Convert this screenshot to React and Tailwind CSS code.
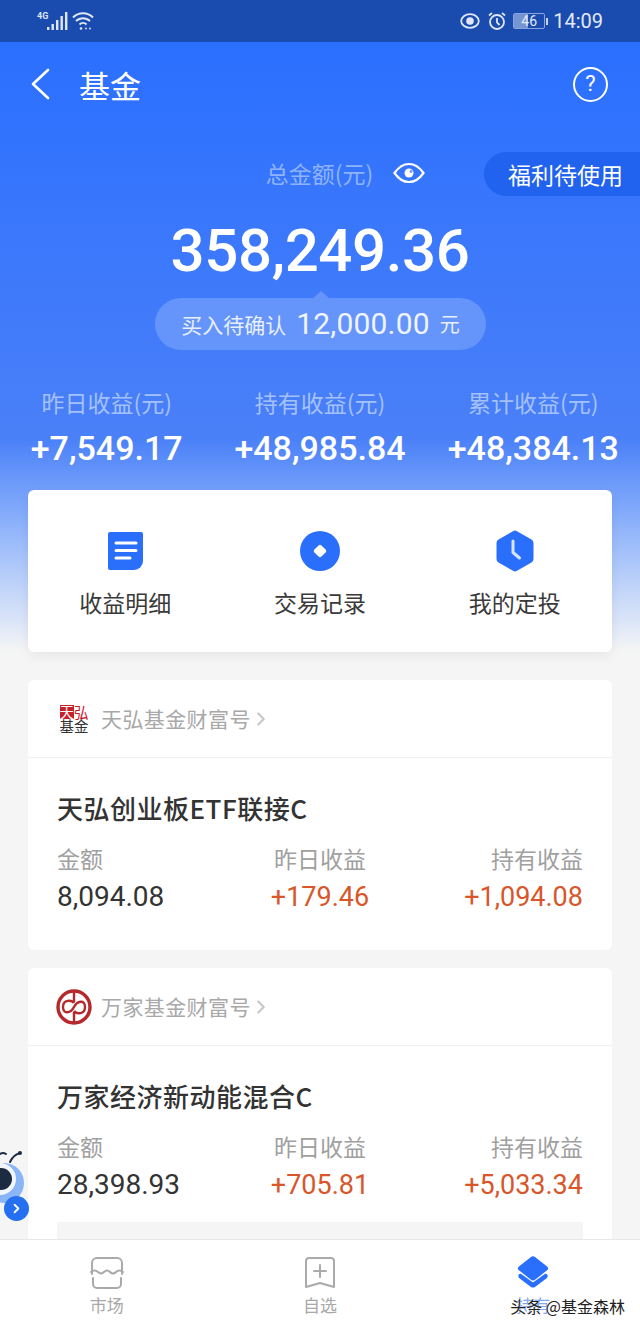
import React from "react";
import { ChevronRight } from "lucide-react";

const CJK = "font-['Noto_Sans_CJK_SC','Noto_Sans',sans-serif]";
const NUM = "font-['Roboto','Noto_Sans_CJK_SC',sans-serif]";

const StatusBar = () => (
  <div className="h-[42px] shrink-0 bg-[#1a4bae] flex items-center justify-between pl-[37px] pr-[37px] text-[#d5e0f5]">
    <div className="flex items-center gap-[1px]">
      <svg width="34" height="22" viewBox="0 0 34 22" fill="#dfe7f7">
        <text x="0" y="9" fontSize="9" fontFamily="Roboto" fontWeight="700">4G</text>
        <rect x="10" y="17" width="2.400" height="3" />
        <rect x="14.500" y="14" width="2.400" height="6" />
        <rect x="19" y="10" width="2.400" height="10" />
        <rect x="23.500" y="6" width="2.400" height="14" />
        <rect x="28" y="2" width="2.400" height="18" />
      </svg>
      <svg width="22" height="20" viewBox="0 0 22 20" fill="none" stroke="#dfe7f7" strokeWidth="2">
        <path d="M1 6.500a14 14 0 0 1 20 0" />
        <path d="M4 10a10 10 0 0 1 14 0" />
        <path d="M7.500 13.500a5 5 0 0 1 7 0" />
        <circle cx="9" cy="17.500" r="1.300" fill="#dfe7f7" stroke="none" />
        <circle cx="14" cy="17.500" r="0.900" fill="#dfe7f7" stroke="none" />
        <circle cx="18" cy="17.500" r="0.900" fill="#dfe7f7" stroke="none" />
      </svg>
    </div>
    <div className="flex items-center">
      <svg width="20" height="16" viewBox="0 0 20 16" fill="none" className="mr-[7px]">
        <ellipse cx="10" cy="8" rx="8.800" ry="6.800" stroke="#dfe7f7" strokeWidth="1.800" />
        <circle cx="10" cy="8" r="3.800" fill="#dfe7f7" />
      </svg>
      <svg width="20" height="20" viewBox="0 0 20 20" fill="none" stroke="#dfe7f7" strokeWidth="1.800" className="mr-[6px]">
        <circle cx="10" cy="11" r="7" />
        <path d="M10 7v4.500l2.500 2.500M2 4.500 5 2M18 4.500 15 2" />
      </svg>
      <div className="relative w-[32px] h-[16px] rounded-[2px] border border-[#8aa4db] overflow-hidden flex items-center justify-center text-[14px] leading-none text-[#e5ecf9] font-['Roboto',sans-serif]">
        <div className="absolute left-0 top-0 bottom-0 w-[46%] bg-[#7595d3]" />
        <span className="relative">46</span>
      </div>
      <div className="w-[2px] h-[7px] bg-[#c6d4ef] ml-[1px] mr-[5px]" />
      <span className="text-[20px] leading-none font-['Roboto',sans-serif] text-[#e3eaf8]">14:09</span>
    </div>
  </div>
);

const Stat = ({ label, value }) => (
  <div className="flex flex-col items-center">
    <div className={`${CJK} text-[23px] leading-[34px] text-[#a5c1fb] whitespace-nowrap`}>{label}</div>
    <div className={`${NUM} text-[34px] leading-[44px] font-medium text-white whitespace-nowrap mt-[7px]`}>{value}</div>
  </div>
);

const Action = ({ icon, label }) => (
  <div className="flex flex-col items-center w-[195px]">
    <div className="h-[44px] flex items-center justify-center">{icon}</div>
    <div className={`${CJK} text-[23px] leading-[32px] text-[#3a3a3a] mt-[13px]`}>{label}</div>
  </div>
);

const Cell = ({ label, value, align, red }) => (
  <div className={`flex flex-col ${align}`}>
    <div className={`${CJK} text-[23px] leading-[32px] text-[#a0a0a0]`}>{label}</div>
    <div className={`${NUM} leading-[36px] mt-[5px] ${red ? "text-[27px] text-[#d9562a]" : "text-[28px] text-[#333]"}`}>{value}</div>
  </div>
);

const FundCard = ({ logo, company, name, amount, yesterday, total, children, className }) => (
  <div className={`bg-white rounded-[6px] mx-[28px] shrink-0 ${className}`}>
    <div className="h-[78px] flex items-center pl-[28px] border-b border-[#f0f0f0]">
      <div className="w-[36px] flex justify-center">{logo}</div>
      <div className={`${CJK} text-[21px] leading-none text-[#a8a8a8] ml-[9px] tracking-[0.4px]`}>{company}</div>
      <ChevronRight size={22} strokeWidth={2.4} className="text-[#c8c8c8] -ml-[1px]" />
    </div>
    <div className="px-[29px] pt-[32px] pb-[35px]">
      <div className={`${CJK} text-[26px] leading-[36px] font-medium text-[#333] tracking-[0.5px]`}>{name}</div>
      <div className="grid grid-cols-3 mt-[16px]">
        <Cell label="金额" value={amount} align="items-start" />
        <Cell label="昨日收益" value={yesterday} align="items-center" red />
        <Cell label="持有收益" value={total} align="items-end" red />
      </div>
      {children}
    </div>
  </div>
);

const Mascot = () => (
  <div className="absolute left-0 top-[1146px] w-[30px] h-[76px]">
    <svg width="30" height="76" viewBox="0 0 30 76" fill="none">
      <path d="M10 16 Q13 9 20 7" stroke="#1f2a44" strokeWidth="2" strokeLinecap="round" />
      <circle cx="20" cy="7" r="2" fill="#1f2a44" />
      <path d="M0 8 Q3 6 6 8" stroke="#1f2a44" strokeWidth="2" strokeLinecap="round" />
      <circle cx="4" cy="37" r="20" fill="#8ab6f8" />
      <circle cx="0" cy="33" r="16" fill="#f2f6fd" />
      <circle cx="1" cy="33" r="11" fill="#1d2b40" />
    </svg>
    <div className="absolute left-[4px] top-[50px] w-[25px] h-[25px] rounded-full bg-[#2470f0] flex items-center justify-center">
      <ChevronRight size={15} strokeWidth={3} className="text-white" />
    </div>
  </div>
);

const TabBar = () => (
  <div className="h-[90px] shrink-0 bg-white border-t border-[#e8e8e8] grid grid-cols-3 relative">
    <div className="flex flex-col items-center pt-[16px]">
      <svg width="36" height="34" viewBox="0 0 36 34" fill="none" stroke="#aaa" strokeWidth="2" strokeLinecap="round" strokeLinejoin="round">
        <path d="M3 18V7a5 5 0 0 1 5-5h20a5 5 0 0 1 5 5v11" />
        <path d="M2 16q4-3 7 0t6 0 6 0 6 0 7 0" />
        <path d="M4 22v6a4 4 0 0 0 4 4h20a4 4 0 0 0 4-4v-6" />
      </svg>
      <div className={`${CJK} text-[17px] leading-[24px] text-[#a8a8a8] mt-[3px]`}>市场</div>
    </div>
    <div className="flex flex-col items-center pt-[16px]">
      <svg width="32" height="33" viewBox="0 0 32 33" fill="none" stroke="#aaa" strokeWidth="2" strokeLinejoin="round">
        <path d="M2 5a3 3 0 0 1 3-3h22a3 3 0 0 1 3 3v26l-14-4-14 4z" />
        <path d="M16 9v12M10 15h12" strokeLinecap="round" />
      </svg>
      <div className={`${CJK} text-[17px] leading-[24px] text-[#a8a8a8] mt-[4px]`}>自选</div>
    </div>
    <div className="flex flex-col items-center pt-[16px]">
      <svg width="32" height="34" viewBox="0 0 34 36" fill="#2a6ffb">
        <path d="M14.500 1.200a4 4 0 0 1 5 0l12.500 10a2.500 2.500 0 0 1 0 3.800l-12.500 10a4 4 0 0 1-5 0L2 15a2.500 2.500 0 0 1 0-3.800z" />
        <path d="M1.500 20.500a2 2 0 0 1 3-1.500l12.500 9 12.500-9a2 2 0 0 1 3 1.500v1.500a2 2 0 0 1-1 1.500l-12 9a4 4 0 0 1-5 0l-12-9a2 2 0 0 1-1-1.500z" />
      </svg>
      <div className={`${CJK} text-[17px] leading-[24px] text-[#7fa8f5] mt-[3px]`}>持有</div>
    </div>
    <div className={`${CJK} absolute right-[15px] top-[54px] text-[16px] leading-[24px] text-[#222] [text-shadow:0_0_1px_#fff] whitespace-nowrap`}>
      头条 @基金森林
    </div>
  </div>
);

export default function App() {
  return (
    <div className="relative w-[640px] h-[1329px] overflow-hidden flex flex-col bg-[#f5f5f5]">
      <StatusBar />
      <div className="flex-1 min-h-0 overflow-hidden bg-gradient-to-b from-[#2a6fff] via-[#4a80f8] via-[65%] to-[#f5f5f5] bg-[length:100%_610px] bg-no-repeat flex flex-col">
        {/* Nav */}
        <div className="h-[84px] shrink-0 flex items-center justify-between pl-[30px] pr-[32px]">
          <div className="flex items-center">
            <svg width="20" height="32" viewBox="0 0 20 32" fill="none" stroke="#fff" strokeWidth="2.600" strokeLinecap="round" strokeLinejoin="round">
              <path d="M18 2 3 16l15 14" />
            </svg>
            <span className={`${CJK} text-[31px] leading-none text-white ml-[29px] font-normal`}>基金</span>
          </div>
          <div className="w-[35px] h-[35px] rounded-full border-2 border-white flex items-center justify-center text-white text-[22px] leading-none font-['Roboto',sans-serif]">
            ?
          </div>
        </div>

        {/* Total */}
        <div className="relative h-[90px] shrink-0 flex items-center justify-center pl-[51px] pt-[4px]">
          <span className={`${CJK} text-[23px] leading-none text-[#8fb3fb]`}>总金额(元)</span>
          <svg width="32" height="22" viewBox="0 0 32 22" fill="none" className="ml-[20px]">
            <path d="M1.500 11C6 4.500 10.500 2 16 2s10 2.500 14.500 9C26 17.500 21.500 20 16 20S6 17.500 1.500 11z" stroke="#fff" strokeWidth="2.200" />
            <circle cx="16" cy="11" r="4.500" fill="#fff" />
            <circle cx="18" cy="9.500" r="1.400" fill="#6f9cf8" />
          </svg>
          <div className={`${CJK} absolute right-0 top-[26px] w-[156px] h-[44px] rounded-l-[22px] bg-[#2163ee] flex items-center pl-[24px] text-[23px] leading-none text-white whitespace-nowrap`}>
            福利待使用
          </div>
        </div>

        <div className={`${NUM} text-[60px] leading-[70px] font-medium text-white text-center tracking-[-0.4px] shrink-0`}>
          358,249.36
        </div>

        {/* Pending */}
        <div className="relative self-start ml-[155px] mt-[12px] w-[331px] h-[52px] rounded-[26px] bg-[#6595fb] flex items-center justify-center shrink-0">
          <div className="absolute left-1/2 -top-[7px] -translate-x-1/2 w-0 h-0 border-x-[8px] border-x-transparent border-b-[7px] border-b-[#6595fb]" />
          <span className={`${CJK} text-[21px] leading-none text-[#e8effe]`}>买入待确认</span>
          <span className={`${NUM} text-[30px] leading-none text-[#f0f4ff] ml-[10px] tracking-[0.2px]`}>12,000.00</span>
          <span className={`${CJK} text-[20px] leading-none text-[#e8effe] ml-[10px]`}>元</span>
        </div>

        {/* Stats */}
        <div className="grid grid-cols-3 mt-[35px] shrink-0">
          <Stat label="昨日收益(元)" value="+7,549.17" />
          <Stat label="持有收益(元)" value="+48,985.84" />
          <Stat label="累计收益(元)" value="+48,384.13" />
        </div>

        {/* Actions */}
        <div className="mx-[28px] mt-[20px] h-[162px] shrink-0 rounded-[6px] bg-white shadow-[0_4px_12px_rgba(0,0,0,0.06)] flex items-start justify-center pt-[39px]">
          <Action
            label="收益明细"
            icon={
              <svg width="37" height="40" viewBox="0 0 37 40">
                <path d="M3 1h31a2 2 0 0 1 2 2v27a9 9 0 0 1-9 9H3a2 2 0 0 1-2-2V3a2 2 0 0 1 2-2z" fill="#2a6ffb" />
                <path d="M9 12h20M9 19.500h20M9 27h14" stroke="#fff" strokeWidth="3" strokeLinecap="round" />
              </svg>
            }
          />
          <Action
            label="交易记录"
            icon={
              <svg width="40" height="40" viewBox="0 0 40 40">
                <circle cx="20" cy="20" r="20" fill="#2a6ffb" />
                <path d="M18.600 14.400a2 2 0 0 1 2.800 0l4.200 4.200a2 2 0 0 1 0 2.800l-4.200 4.200a2 2 0 0 1-2.800 0l-4.200-4.200a2 2 0 0 1 0-2.800z" fill="#fff" />
              </svg>
            }
          />
          <Action
            label="我的定投"
            icon={
              <svg width="38" height="42" viewBox="0 0 38 42">
                <path d="M17 1.200a4 4 0 0 1 4 0l14.500 8.300a4 4 0 0 1 2 3.500v16a4 4 0 0 1-2 3.500L21 40.800a4 4 0 0 1-4 0L2.500 32.500a4 4 0 0 1-2-3.500V13a4 4 0 0 1 2-3.500z" fill="#2a6ffb" />
                <path d="M17 11v11.500l6.500 5.500" fill="none" stroke="#d7e4fe" strokeWidth="3" strokeLinecap="round" strokeLinejoin="round" />
              </svg>
            }
          />
        </div>

        <FundCard
          className="mt-[28px]"
          logo={
            <div className="w-[29px] flex flex-col font-['Noto_Sans_CJK_SC',sans-serif] text-[14.5px] leading-[14px]">
              <div className="flex">
                <span className="bg-[#c8202a] text-white w-[14.5px] text-center">天</span>
                <span className="text-[#c8202a] w-[14.5px] text-center">弘</span>
              </div>
              <div className="text-[#333] whitespace-nowrap">基金</div>
            </div>
          }
          company="天弘基金财富号"
          name="天弘创业板ETF联接C"
          amount="8,094.08"
          yesterday="+179.46"
          total="+1,094.08"
        />

        <FundCard
          className="mt-[18px]"
          logo={
            <svg width="36" height="36" viewBox="0 0 36 36" fill="none" stroke="#b5282c" strokeWidth="2.400">
              <circle cx="18" cy="18" r="16" strokeWidth="3.400" />
              <path d="M18 3v10M18 23v10" />
              <path d="M18 14C16 11 7 10 7 18 7 26 15 24 18 18 21 12 29 10 29 18 29 26 20 25 18 22" />
            </svg>
          }
          company="万家基金财富号"
          name="万家经济新动能混合C"
          amount="28,398.93"
          yesterday="+705.81"
          total="+5,033.34"
        >
          <div className="h-[60px] bg-[#f5f5f5] mt-[19px]" />
        </FundCard>
      </div>
      <TabBar />
      <Mascot />
    </div>
  );
}
